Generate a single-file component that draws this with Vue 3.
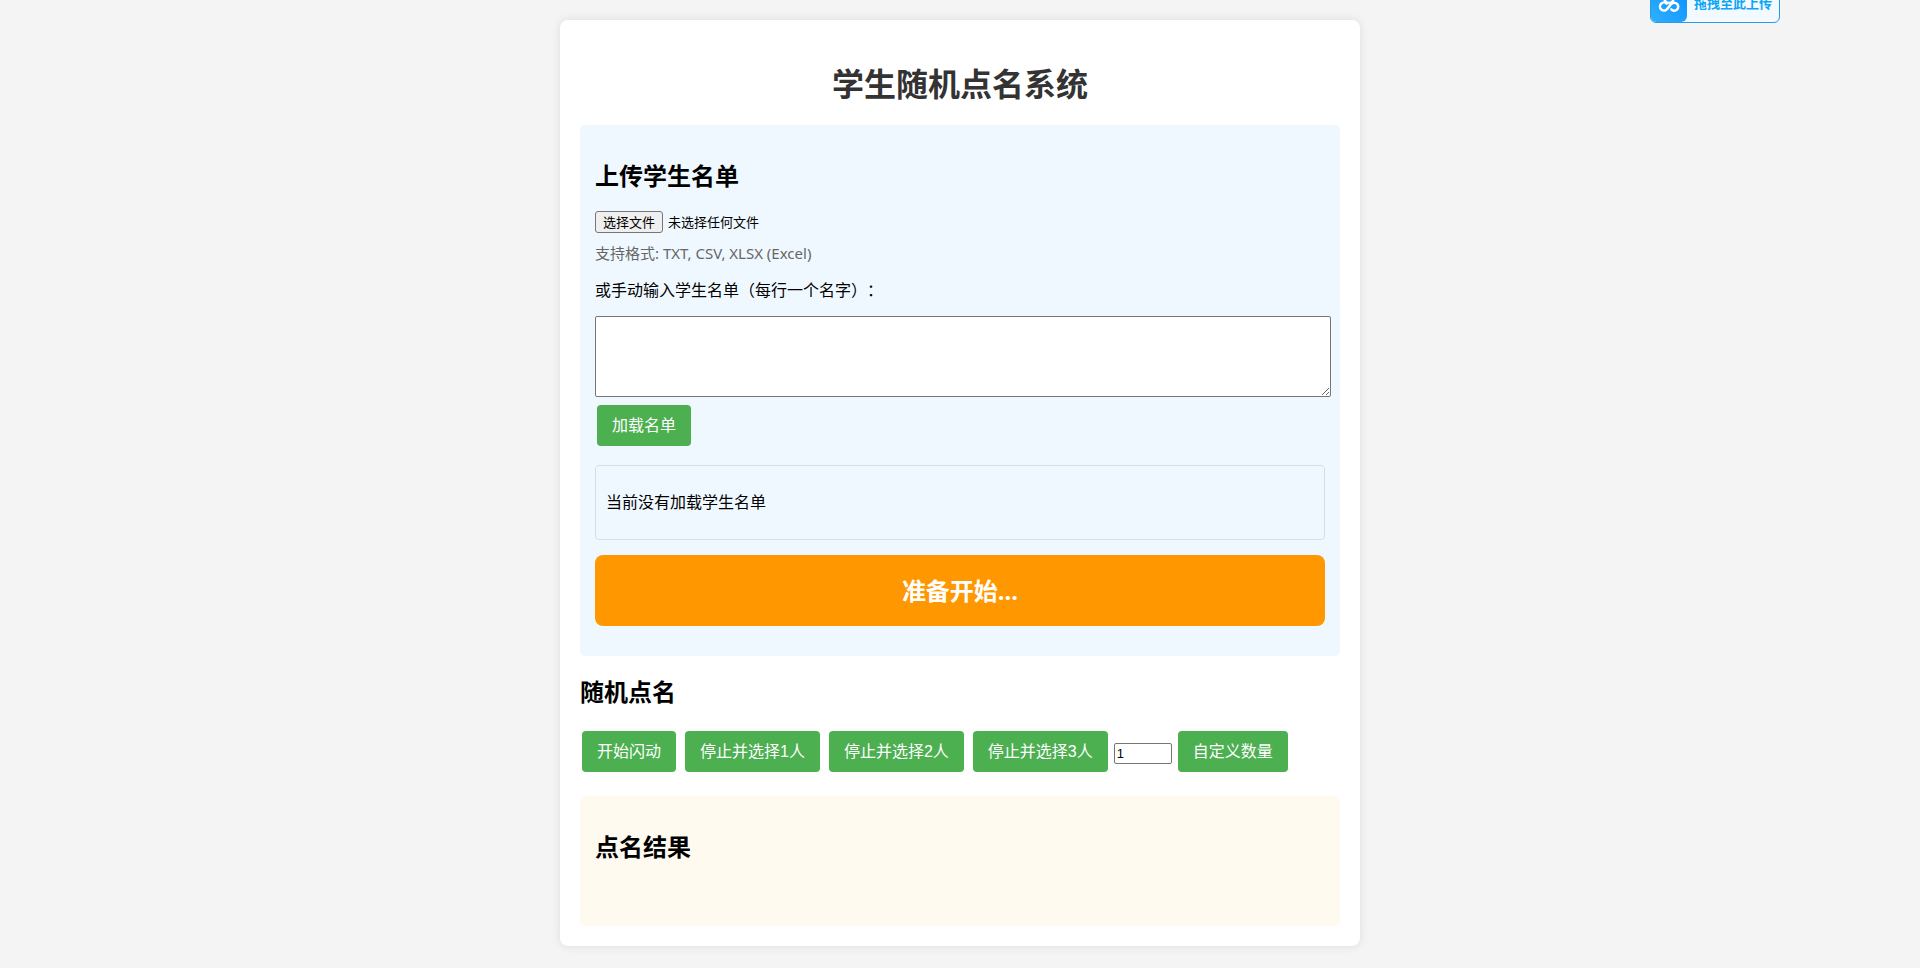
<script setup>
import { ref } from 'vue'

const fileName = ref('未选择任何文件')
const names = ref('')
const amount = ref(1)

function onFile(event) {
  const file = event.target.files[0]
  fileName.value = file ? file.name : '未选择任何文件'
}
</script>

<template>
  <main class="card">
    <h1>学生随机点名系统</h1>

    <section class="upload">
      <h2>上传学生名单</h2>
      <label class="picker">
        <input type="file" accept=".txt,.csv,.xlsx" @change="onFile" />
        <span class="picker-button">选择文件</span>
        <span>{{ fileName }}</span>
      </label>
      <p class="hint">支持格式: TXT, CSV, XLSX (Excel)</p>
      <label class="prompt" for="names">或手动输入学生名单（每行一个名字）：</label>
      <textarea id="names" v-model="names" rows="5"></textarea>
      <button type="button" class="action">加载名单</button>
      <div class="list"><p>当前没有加载学生名单</p></div>
      <div class="flash">准备开始...</div>
    </section>

    <section>
      <h2>随机点名</h2>
      <div class="controls">
        <button type="button" class="action">开始闪动</button>
        <button v-for="n in 3" :key="n" type="button" class="action">停止并选择{{ n }}人</button>
        <input v-model="amount" type="number" min="1" aria-label="自定义数量" />
        <button type="button" class="action">自定义数量</button>
      </div>
    </section>

    <section class="result">
      <h2>点名结果</h2>
    </section>
  </main>

  <button type="button" class="drop">
    <span class="drop-icon">
      <svg viewBox="0 0 24 24" width="24" height="24" fill="none" stroke="#fff" stroke-width="2.5" stroke-linecap="round">
        <circle cx="12" cy="6.5" r="4.5" />
        <path d="M9.8 11.6 A4 4 0 1 0 9.8 17.300 L14.400 11.800 A4 4 0 1 1 14.300 17.400" />
      </svg>
    </span>
    <span class="drop-text">拖拽至此上传</span>
  </button>
</template>

<style>
body {
  margin: 0;
  background: #f4f4f4;
}
</style>

<style scoped>
.card {
  box-sizing: border-box;
  max-width: 800px;
  margin: 20px auto;
  padding: 20px;
  background: #fff;
  border-radius: 8px;
  box-shadow: 0 0 10px rgba(0, 0, 0, 0.1);
  font: 16px/21px "Noto Sans", "Noto Sans CJK SC", sans-serif;
  color: #000;
}
h1 {
  margin: 0;
  padding: 22px 0 20px;
  font-size: 32px;
  line-height: 43px;
  text-align: center;
  color: #333;
}
h2 {
  margin: 20px 0;
  font-size: 24px;
  line-height: 32px;
}
.upload,
.result {
  display: flow-root;
  border-radius: 5px;
}
.upload {
  padding: 15px 15px 30px;
  background: #f0f8ff;
}
.picker {
  display: flex;
  align-items: center;
  gap: 5px;
  width: fit-content;
  margin-top: -1px;
  font-size: 13px;
  line-height: 18px;
}
.picker input {
  position: absolute;
  width: 1px;
  height: 1px;
  opacity: 0;
}
.picker-button {
  padding: 1px 7px;
  background: #efefef;
  border: 1px solid #767676;
  border-radius: 3px;
}
.hint {
  margin: 10px 0 16px;
  font-size: 15px;
  line-height: 21px;
  color: #666;
}
.prompt {
  display: block;
  margin-bottom: 15px;
  text-spacing-trim: space-all;
}
textarea {
  display: block;
  width: 100%;
  padding: 2px;
  border: 1px solid #767676;
  border-radius: 2px;
  background: #fff;
  font: 13px/15px "Liberation Mono", "Noto Sans CJK SC", monospace;
  resize: both;
}
.action {
  padding: 10px 15px;
  border: 0;
  border-radius: 4px;
  background: #4caf50;
  color: #fff;
  font: 16px/21px "Liberation Sans", "Noto Sans CJK SC", sans-serif;
  cursor: pointer;
}
.upload .action {
  margin: 8px 2px 0;
}
.list {
  margin-top: 19px;
  padding: 10px;
  border: 1px solid #d6deeb;
  border-radius: 4px;
}
.list p {
  margin: 16px 0;
}
.flash {
  margin-top: 15px;
  padding: 20px;
  border-radius: 8px;
  background: #ff9800;
  color: #fff;
  font-size: 24px;
  font-weight: bold;
  line-height: 31px;
  text-align: center;
}
.controls {
  display: flex;
  flex-wrap: wrap;
  align-items: center;
  gap: 9px;
  padding: 3px 2px 0;
}
.controls input {
  box-sizing: border-box;
  width: 58px;
  height: 21px;
  margin: 4px -3px 0;
  padding: 1px 2px;
  border: 1px solid #767676;
  border-radius: 2px;
  font: 13px "Liberation Sans", sans-serif;
}
.result {
  margin-top: 24px;
  min-height: 100px;
  padding: 15px;
  background: #fffaf0;
}
.drop {
  position: absolute;
  top: -15px;
  right: 140px;
  display: flex;
  padding: 0;
  overflow: hidden;
  border: 1px solid #2a9be8;
  border-radius: 6px;
  background: #f3faff;
  color: #0aa5f5;
  font: bold 13px/36px "Liberation Sans", "Noto Sans CJK SC", sans-serif;
}
.drop-icon {
  display: grid;
  place-items: center;
  width: 36px;
  height: 36px;
  border-radius: 0 0 6px 0;
  background: linear-gradient(45deg, #2fb0ff, #0a8fff);
}
.drop-text {
  padding: 0 7px;
}
</style>
